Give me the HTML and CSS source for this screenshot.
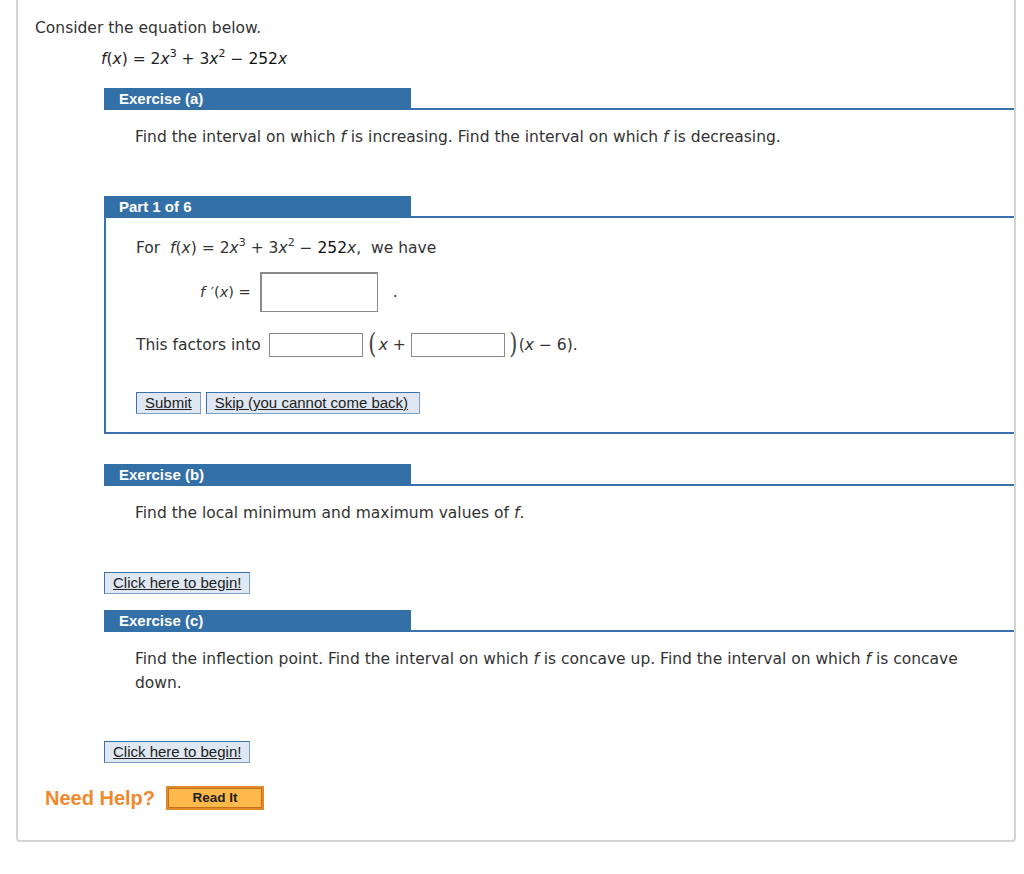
FILE: index.html
```html
<!DOCTYPE html>
<html>
<head>
<meta charset="utf-8">
<link rel="stylesheet" href="styles.css">
</head>
<body>
<div class="frame">
  <p class="intro">Consider the equation below.</p>
  <p class="eq"><i>f</i>(<i>x</i>) = 2<i>x</i><sup>3</sup> + 3<i>x</i><sup>2</sup> − <b>252</b><i>x</i></p>

  <section class="ex exa">
    <div class="ex-head"><span class="tab">Exercise (a)</span></div>
    <p class="ex-text">Find the interval on which <i>f</i> is increasing. Find the interval on which <i>f</i> is decreasing.</p>
  </section>

  <section class="part">
    <div class="ex-head"><span class="tab">Part 1 of 6</span></div>
    <div class="part-body">
      <p class="row1">For&nbsp; <i>f</i>(<i>x</i>) = 2<i>x</i><sup>3</sup> + 3<i>x</i><sup>2</sup> − <b>252</b><i>x</i>,&nbsp; we have</p>
      <div class="row2"><span class="lbl"><i>f</i> ′(<i>x</i>) =</span><span class="box big"></span><span class="dot">.</span></div>
      <div class="row3"><span>This factors into</span><span class="box small b1"></span><span class="paren">(</span><span><i>x</i> +</span><span class="box small b2"></span><span class="paren rp">)</span><span>(<i>x</i> − 6).</span></div>
      <div class="btns"><span class="btn">Submit</span><span class="btn skip">Skip (you cannot come back)</span></div>
    </div>
  </section>

  <section class="ex exb">
    <div class="ex-head"><span class="tab">Exercise (b)</span></div>
    <p class="ex-text">Find the local minimum and maximum values of <i>f</i>.</p>
    <span class="btn begin">Click here to begin!</span>
  </section>

  <section class="ex exc">
    <div class="ex-head"><span class="tab">Exercise (c)</span></div>
    <p class="ex-text">Find the inflection point. Find the interval on which <i>f</i> is concave up. Find the interval on which <i>f</i> is concave down.</p>
    <span class="btn begin">Click here to begin!</span>
  </section>

  <div class="help"><span class="need">Need Help?</span><span class="read">Read It</span></div>
</div>
</body>
</html>
```

FILE: styles.css
```css
html, body { margin: 0; padding: 0; background: #fff; }
body { font-family: "DejaVu Sans", Verdana, sans-serif; color: #333; font-size: 15.5px; }
.frame {
  margin-left: 16px;
  width: 1000px;
  height: 842px;
  box-sizing: border-box;
  border: 2px solid #d4d4d4;
  border-top: none;
  border-radius: 0 0 4px 4px;
  padding: 17px 0 0 17px;
}
p { margin: 0; }
sup { font-size: 11px; line-height: 0; vertical-align: 7px; }
i { font-style: italic; }
b { font-weight: normal; color: #111; }
.intro { line-height: 22px; }
.eq { margin: 9px 0 0 66px; line-height: 22px; color: #222; }
.ex, .part { margin-left: 69px; }
.exa { margin-top: 18px; }
.ex-head { display: flex; border-bottom: 2px solid #3a72b0; }
.tab {
  width: 292px; height: 22px; line-height: 21px;
  background: #3470a8; color: #fff;
  font-family: "Liberation Sans", Arial, sans-serif; font-weight: bold; font-size: 15px;
  padding-left: 15px; margin-bottom: -2px;
}
.ex-text { margin: 15px 0 0 31px; line-height: 24px; padding-right: 40px; }
.part { margin-top: 47px; }
.part-body { border-left: 2px solid #3a72b0; border-bottom: 2px solid #3a72b0; padding: 19px 0 18px 30px; box-sizing: border-box; height: 216px; }
.row1 { line-height: 22px; }
.row2 { display: flex; align-items: center; margin: 13px 0 0 64px; height: 40px; }
.lbl { font-size: 14.5px; margin-right: 9px; }
.lbl i:first-child { margin-right: 1px; }
.box { display: inline-block; border: 1px solid #999; background: #fff; box-sizing: border-box; }
.big { width: 118px; height: 40px; border-color: #8a8a8a; border-width: 2px 1px 1px 2px; }
.dot { margin-left: 15px; }
.row3 { display: flex; align-items: center; margin-top: 19px; height: 28px; }
.small { width: 94px; height: 24px; border-color: #888; }
.b1 { margin-left: 8px; }
.b2 { margin-left: 5px; }
.paren { font-family: "DejaVu Serif", serif; font-size: 28px; color: #444; margin: -3px 1px 0 4px; transform: scaleX(0.75); line-height: 28px; }
.rp { margin: -3px 0 0 3px; }
.btns { display: flex; gap: 5px; margin-top: 33px; }
.btn {
  display: inline-block; box-sizing: border-box; height: 22px; line-height: 19px;
  padding: 0 8px; background: #dfe8f2; border: 1px solid #3a72b0; border-right-color: #7aa0c8; border-bottom-color: #7aa0c8;
  font-family: "Liberation Sans", Arial, sans-serif; font-size: 15px; color: #222; text-decoration: underline;
}
.skip { padding: 0 11px 0 8px; }
.exb { margin-top: 30px; }
.exb .begin { margin-top: 47px; }
.exc { margin-top: 16px; }
.exc .begin { margin-top: 46px; }
.help { display: flex; align-items: center; margin: 23px 0 0 10px; }
.need { font-family: "Liberation Sans", Arial, sans-serif; font-weight: bold; font-size: 20px; color: #f0892d; }
.read {
  margin-left: 11px; width: 98px; height: 24px; box-sizing: border-box;
  background: #fdb94a; border: 2px solid #e08a2c; box-shadow: inset 0 0 0 1px #c96e1d;
  font-family: "Liberation Sans", Arial, sans-serif; font-weight: bold; font-size: 13.5px; color: #222;
  text-align: center; line-height: 20px;
}
```
